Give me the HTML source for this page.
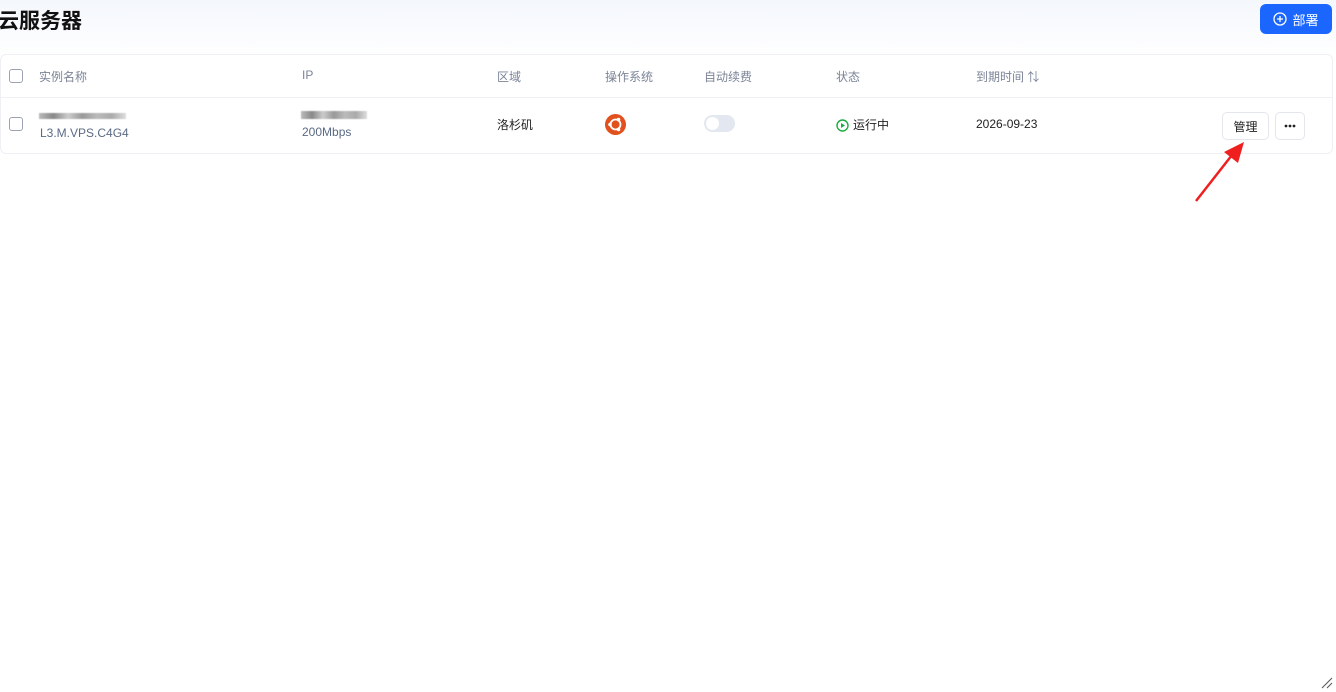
<!DOCTYPE html>
<html><head><meta charset="utf-8"><style>
body{margin:0;width:1336px;height:692px;background:#fff;font-family:"Liberation Sans","Noto Sans CJK SC",sans-serif;position:relative;overflow:hidden}
.top{position:absolute;left:0;top:0;width:1336px;height:60px;background:linear-gradient(#f4f7fc,#fff)}
h1{position:absolute;left:-2px;top:5px;margin:0;font-size:21px;font-weight:bold;color:#111;font-family:"Noto Sans CJK SC",sans-serif}
.btn{position:absolute;left:1260px;top:4px;width:72px;height:30px;background:#1a66ff;border-radius:6px;color:#fff;font-size:13px;font-family:"Noto Sans CJK SC",sans-serif;display:flex;align-items:center;justify-content:center;gap:5px}
.card{position:absolute;left:0;top:54px;width:1331px;height:98px;border:1px solid #eef0f4;border-radius:6px;background:#fff}
.hr{position:absolute;left:0;top:42px;width:100%;height:1px;background:#eef0f4}
.t{position:absolute;font-size:12px;font-family:"Liberation Sans","Noto Sans CJK SC",sans-serif;white-space:nowrap}
.h{color:#7b8497;top:13px}
.cb{position:absolute;width:12px;height:12px;border:1px solid #9aa2b4;border-radius:3px;left:8px}
.blur{position:absolute;height:6px;background:linear-gradient(90deg,#bbb,#888,#ccc,#999,#bbb,#aaa,#ddd);filter:blur(.6px)}
.sw{position:absolute;left:703px;top:60px;width:31px;height:17px;border-radius:9px;background:#e3e7ef}
.sw:after{content:"";position:absolute;left:2px;top:2px;width:13px;height:13px;border-radius:50%;background:#fff}
.ob{position:absolute;top:57px;height:26px;border:1px solid #e3e6ec;border-radius:5px;background:#fff;font-size:12px;display:flex;align-items:center;justify-content:center;color:#222;font-family:"Noto Sans CJK SC",sans-serif}
</style></head><body>
<div class="top"></div>
<h1>云服务器</h1>
<div class="btn"><svg width="14" height="14" viewBox="0 0 14 14"><circle cx="7" cy="7" r="6" fill="none" stroke="#fff" stroke-width="1.3"/><path d="M7 4v6M4 7h6" stroke="#fff" stroke-width="1.3"/></svg>部署</div>
<div class="card">
<div class="cb" style="top:14px"></div>
<div class="t h" style="left:38px">实例名称</div>
<div class="t h" style="left:301px">IP</div>
<div class="t h" style="left:496px">区域</div>
<div class="t h" style="left:604px">操作系统</div>
<div class="t h" style="left:703px">自动续费</div>
<div class="t h" style="left:835px">状态</div>
<div class="t h" style="left:975px">到期时间 ⇅</div>
<div class="hr"></div>
<div class="cb" style="top:62px"></div>
<div class="blur" style="left:38px;top:58px;width:87px"></div>
<div class="t" style="left:39px;top:71px;color:#5a6a85">L3.M.VPS.C4G4</div>
<div class="blur" style="left:300px;top:56px;width:66px;height:8px"></div>
<div class="t" style="left:301px;top:70px;color:#5a6a85">200Mbps</div>
<div class="t" style="left:496px;top:61px;color:#222">洛杉矶</div>
<svg style="position:absolute;left:604px;top:59px" width="21" height="21" viewBox="0 0 21 21"><circle cx="10.5" cy="10.5" r="10.5" fill="#e2501e"/><circle cx="10.5" cy="10.5" r="5" fill="none" stroke="#fff" stroke-width="1.8"/><circle cx="5" cy="10.5" r="1.8" fill="#fff"/><circle cx="13.5" cy="5.5" r="1.8" fill="#fff"/><circle cx="13.5" cy="15.5" r="1.8" fill="#fff"/></svg>
<div class="sw"></div>
<svg style="position:absolute;left:835px;top:64px" width="13" height="13" viewBox="0 0 13 13"><circle cx="6.5" cy="6.5" r="5.5" fill="none" stroke="#1aad3e" stroke-width="1.4"/><path d="M5 4v5l4-2.5z" fill="#1aad3e"/></svg>
<div class="t" style="left:852px;top:61px;color:#222">运行中</div>
<div class="t" style="left:975px;top:62px;color:#222">2026-09-23</div>
<div class="ob" style="left:1221px;width:45px">管理</div>
<div class="ob" style="left:1274px;width:28px"><svg width="12" height="4" viewBox="0 0 12 4"><circle cx="2" cy="2" r="1.4" fill="#222"/><circle cx="6" cy="2" r="1.4" fill="#222"/><circle cx="10" cy="2" r="1.4" fill="#222"/></svg></div>
</div>
<svg style="position:absolute;left:0;top:0" width="1336" height="692"><path d="M1196 201 L1232 155" stroke="#f01f1f" stroke-width="2.5"/><path d="M1244 142 L1224 152 L1238 163 Z" fill="#f01f1f"/><path d="M1322 688 L1332 678 M1327 688 L1332 683" stroke="#555" stroke-width="1"/></svg>
</body></html>
